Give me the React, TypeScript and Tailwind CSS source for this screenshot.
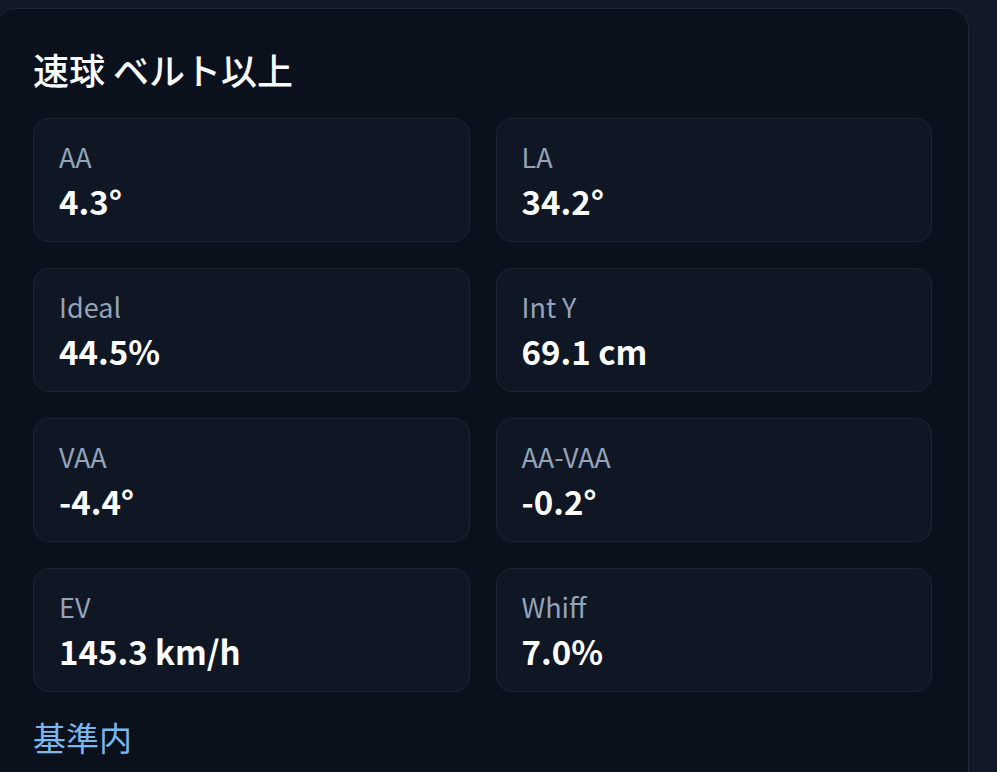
const stats = [
  { label: "AA", value: "4.3°" },
  { label: "LA", value: "34.2°" },
  { label: "Ideal", value: "44.5%" },
  { label: "Int Y", value: "69.1 cm" },
  { label: "VAA", value: "-4.4°" },
  { label: "AA-VAA", value: "-0.2°" },
  { label: "EV", value: "145.3 km/h" },
  { label: "Whiff", value: "7.0%" },
]

const StatCard = ({ label, value }: { label: string; value: string }) => (
  <div className="h-[124px] rounded-[16px] border border-[#1b2535] bg-[#0f1725] px-[25px] pt-[20px]">
    <div className="text-[27px] leading-[36px] text-[#94a3b8]">{label}</div>
    <div className="mt-[4px] text-[33px] font-bold leading-[44px] text-white">{value}</div>
  </div>
)

const App = () => {
  return (
    <div
      className="h-screen w-full overflow-hidden bg-[#111827] pt-[8px]"
      style={{ fontFamily: '"Noto Sans CJK JP", "Noto Sans", sans-serif' }}
    >
      <section className="-ml-[4px] h-[820px] w-[973px] rounded-[20px] border border-[#1c2637] bg-[#0a111d] px-[36px] pt-[33px]">
        <h2 className="text-[36px] font-medium leading-[54px] text-[#f8fafc]">速球 ベルト以上</h2>
        <div className="mt-[22px] grid grid-cols-2 gap-[26px]">
          {stats.map((s) => (
            <StatCard key={s.label} label={s.label} value={s.value} />
          ))}
        </div>
        <div className="mt-[21px] text-[33px] leading-[48px] text-[#7cb6ef]">基準内</div>
      </section>
    </div>
  )
}

export default App
